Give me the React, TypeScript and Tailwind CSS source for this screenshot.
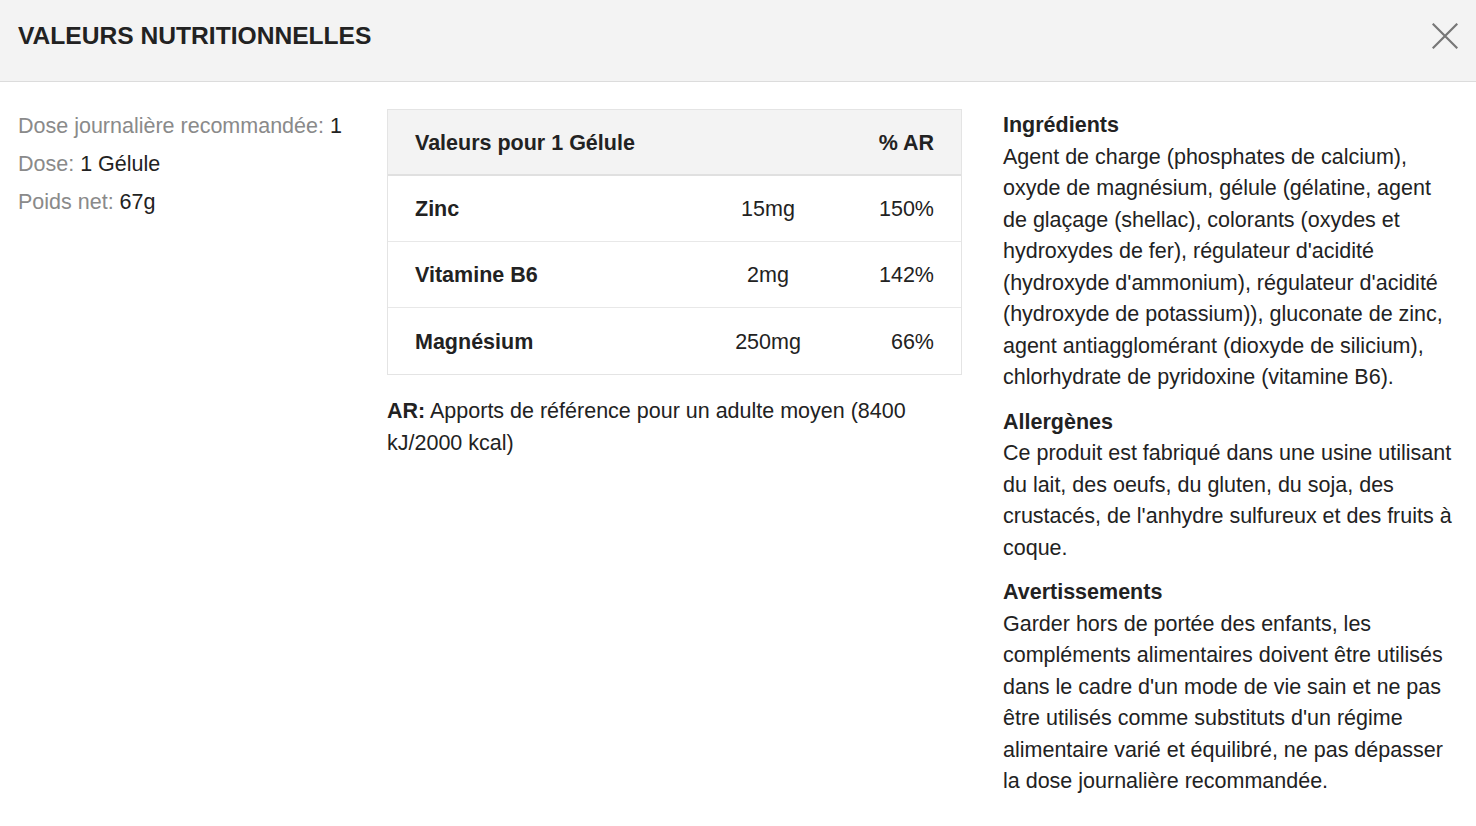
import React from "react";

const rows = [
  { name: "Zinc", amount: "15mg", ar: "150%" },
  { name: "Vitamine B6", amount: "2mg", ar: "142%" },
  { name: "Magnésium", amount: "250mg", ar: "66%" },
];

const sections = [
  {
    title: "Ingrédients",
    body: "Agent de charge (phosphates de calcium), oxyde de magnésium, gélule (gélatine, agent de glaçage (shellac), colorants (oxydes et hydroxydes de fer), régulateur d'acidité (hydroxyde d'ammonium), régulateur d'acidité (hydroxyde de potassium)), gluconate de zinc, agent antiagglomérant (dioxyde de silicium), chlorhydrate de pyridoxine (vitamine B6).",
  },
  {
    title: "Allergènes",
    body: "Ce produit est fabriqué dans une usine utilisant du lait, des oeufs, du gluten, du soja, des crustacés, de l'anhydre sulfureux et des fruits à coque.",
  },
  {
    title: "Avertissements",
    body: "Garder hors de portée des enfants, les compléments alimentaires doivent être utilisés dans le cadre d'un mode de vie sain et ne pas être utilisés comme substituts d'un régime alimentaire varié et équilibré, ne pas dépasser la dose journalière recommandée.",
  },
];

export default function App() {
  return (
    <div
      className="w-[1476px] h-[826px] bg-white text-[#222] overflow-hidden"
      style={{ fontFamily: '"Liberation Sans", Arial, Helvetica, sans-serif' }}
    >
      <header className="h-[82px] bg-[#f3f3f3] border-b border-[#dcdcdc] flex items-center justify-between pl-[18px] pr-[18px]">
        <h1 className="text-[24.6px] font-bold text-[#222] -mt-[9px]">
          VALEURS NUTRITIONNELLES
        </h1>
        <button className="w-[28px] h-[28px] flex items-center justify-center -mt-[10px] -mr-[1px]" aria-label="Fermer">
          <svg width="26" height="26" viewBox="0 0 26 26" fill="none">
            <path d="M1.5 1.5L24.5 24.5M24.5 1.5L1.5 24.5" stroke="#777" strokeWidth="2.2" strokeLinecap="square" />
          </svg>
        </button>
      </header>

      <main className="grid grid-cols-[328px_575px_1fr] gap-x-[41px] px-[18px] pt-[27px]">
        <div className="text-[21.5px] leading-[32px] pt-[1px]">
          <p className="mb-[6px]">
            <span className="text-[#8a8a8a]">Dose journalière recommandée: </span>1
          </p>
          <p className="mb-[6px]">
            <span className="text-[#8a8a8a]">Dose: </span>1 Gélule
          </p>
          <p>
            <span className="text-[#8a8a8a]">Poids net: </span>67g
          </p>
        </div>

        <div>
          <div className="border border-[#e4e4e4] text-[21.5px]">
            <div className="h-[66px] bg-[#f3f3f3] border-b-2 border-[#e0e0e0] flex items-center justify-between px-[27px] pt-[3px] font-bold">
              <span>Valeurs pour 1 Gélule</span>
              <span>% AR</span>
            </div>
            {rows.map((r, i) => (
              <div
                key={r.name}
                className={`h-[66px] grid grid-cols-[1fr_120px_106px] items-center px-[27px] pt-[2px] ${
                  i < rows.length - 1 ? "border-b border-[#e8e8e8]" : ""
                }`}
              >
                <span className="font-bold">{r.name}</span>
                <span className="text-center">{r.amount}</span>
                <span className="text-right">{r.ar}</span>
              </div>
            ))}
          </div>
          <p className="mt-[20px] text-[21.5px] leading-[32px]">
            <span className="font-bold">AR:</span> Apports de référence pour un adulte moyen (8400 kJ/2000 kcal)
          </p>
        </div>

        <div className="text-[21.5px] leading-[31.5px] pt-[1px]">
          {sections.map((s, i) => (
            <section key={s.title} className={i > 0 ? "mt-[13px]" : ""}>
              <h2 className="font-bold">{s.title}</h2>
              <p>{s.body}</p>
            </section>
          ))}
        </div>
      </main>
    </div>
  );
}
